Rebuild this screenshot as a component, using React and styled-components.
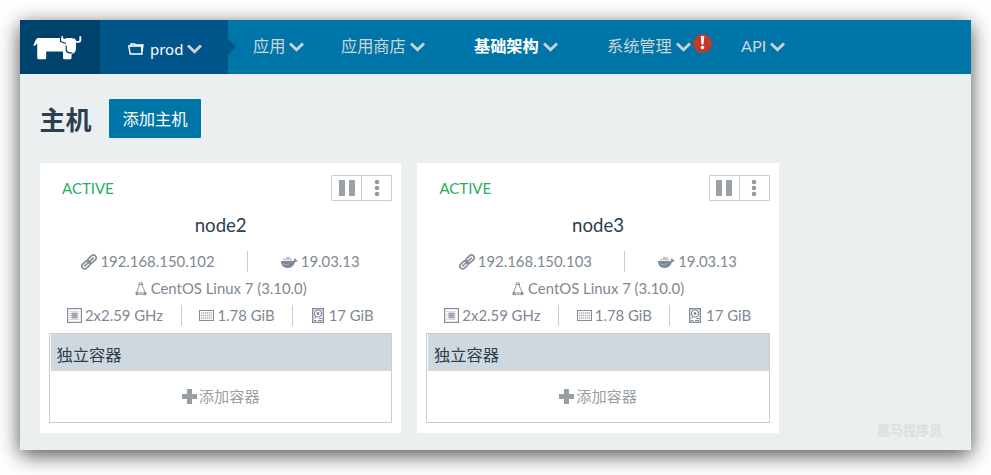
import React from "react";
import styled, { createGlobalStyle } from "styled-components";

const Global = createGlobalStyle`
  *, *::before, *::after { box-sizing: border-box; }
  html, body { margin: 0; background: #fff; overflow: hidden; }
  body { font-family: Lato, "Noto Sans CJK SC", sans-serif; font-size: 15px; color: #2c3e50; }
  button { font: inherit; margin: 0; padding: 0; border: 0; background: none; }
  svg { display: block; flex: none; }
`;

const Frame = styled.div`padding: 20px; height: 475px;`;

const Window = styled.div`
  display: flex;
  flex-direction: column;
  position: relative;
  width: 951px;
  height: 430px;
  background: #ebeff0;
  box-shadow: 0 5px 20px rgba(0, 0, 0, 0.7);
`;

const Nav = styled.nav`
  display: flex;
  height: 54px;
  background: #0075a8;
  line-height: 20px;
`;

const Logo = styled.div`
  width: 80px;
  padding: 16px 0 0 13px;
  background: #00426e;
`;

const Env = styled.div`
  position: relative;
  display: flex;
  align-items: center;
  width: 128px;
  padding: 4px 0 0 28px;
  background: #00558b;
  color: #fff;
  font-family: "Noto Sans", "Open Sans", sans-serif;
  font-size: 15px;
  &::after {
    content: "";
    position: absolute;
    left: 100%;
    top: 19px;
    border: 8px solid transparent;
    border-right: 0;
    border-left-color: #00558b;
  }
`;

const EnvName = styled.span`margin: 0 4px 0 6px;`;

const NavItem = styled.div`
  display: flex;
  align-items: center;
  position: relative;
  width: ${(p) => p.$width}px;
  padding-left: ${(p) => p.$indent}px;
  gap: 4px;
  color: ${(p) => (p.$active ? "#fff" : "#ccd6da")};
  font-weight: ${(p) => (p.$active ? 700 : 400)};
  font-size: 16.2px;
  white-space: nowrap;
`;

const NavLabel = styled.span`padding-bottom: 2px;`;

const Alert = styled.span`
  position: absolute;
  left: ${(p) => p.$left}px;
  top: 14px;
  width: 19px;
  height: 19px;
  border-radius: 50%;
  background: #c0392b;
  display: flex;
  justify-content: center;
  padding-top: 2px;
`;

const Heading = styled.header`
  display: flex;
  align-items: center;
  gap: 17px;
  height: 39px;
  margin: 25px 0 25px 20px;
`;

const Title = styled.h1`
  width: 52px;
  margin: 0;
  font-size: 26px;
  line-height: 39px;
  font-weight: 700;
  padding-top: 3px;
  text-indent: -0.5px;
`;

const AddHost = styled.button`
  width: 92px;
  height: 39px;
  border-radius: 1px;
  background: #0075a8;
  color: #fff;
  font-size: 16.3px;
  line-height: 37px;
  padding-bottom: 1px;
`;

const Hosts = styled.main`
  display: grid;
  grid-template-columns: 361.4px 361.4px;
  gap: 16px;
  padding-left: 20px;
`;

const Card = styled.article`
  height: 270px;
  padding: 12px 9px 0;
  background: #fff;
  color: #808794;
`;

const CardTop = styled.div`
  display: flex;
  justify-content: space-between;
  height: 27px;
  padding-left: 13px;
`;

const Status = styled.span`
  color: #27ae60;
  line-height: 27px;
`;

const Actions = styled.div`
  display: flex;
  width: 61px;
  height: 26px;
  border: 1px solid #c9cdd0;
  border-radius: 1px;
`;

const Action = styled.button`
  flex: 1;
  display: flex;
  align-items: center;
  justify-content: center;
  & + & { border-left: 1px solid #c9cdd0; }
`;

const HostName = styled.h2`
  margin: 10px 0 13px;
  font-size: 18.6px;
  line-height: 26px;
  font-weight: 400;
  color: #2c3e50;
  text-align: center;
`;

const Stats = styled.div`
  display: grid;
  grid-template-columns: ${(p) => p.$columns};
  height: 21px;
  margin-bottom: 6px;
  line-height: 21px;
  font-size: 14.9px;
`;

const Stat = styled.div`
  display: flex;
  align-items: center;
  justify-content: center;
  gap: ${(p) => p.$gap || 3}px;
  white-space: nowrap;
  & + & { border-left: 1px solid #c9cdd0; }
`;

const Stack = styled.section`
  height: 90px;
  margin-top: 7px;
  border: 1px solid #c9cdd0;
`;

const StackName = styled.h3`
  height: 37px;
  margin: 0 0 0 1px;
  padding: 2px 0 0 5.5px;
  background: #d0d8df;
  color: #2c3e50;
  font-size: 16.3px;
  font-weight: 400;
  line-height: 37px;
`;

const AddContainer = styled.button`
  display: flex;
  align-items: center;
  justify-content: center;
  gap: 2px;
  width: 100%;
  height: 51px;
  color: #98a0a5;
  font-size: 15.2px;
`;

const AddLabel = styled.span`padding-bottom: 3px;`;

const Watermark = styled.span`
  position: absolute;
  right: 29px;
  bottom: 10px;
  font-size: 13px;
  line-height: 20px;
  font-weight: 900;
  color: #dedfdf;
`;

const Chevron = () => (
  <svg width="15" height="10" viewBox="0 0 15 10">
    <path d="M1 1.400 7.500 7.800 14 1.400" fill="none" stroke="#cbd3d7" strokeWidth="2.800" />
  </svg>
);

const Cow = () => (
  <svg width="49" height="24" viewBox="0 0 49 24" fill="#fff">
    <path d="M5 2H42Q43 2 43 3V12.500Q42.500 16.500 41 17L38.500 18.500V22Q38.500 23.300 37.200 23.300H31.500Q30 23.300 30 21.800V15.500H13.200V21.800Q13.200 23.300 11.700 23.300H5.700Q4.200 23.300 4.200 21.800V7.500L1.500 10 .3 9.300 3 3.500Q3.600 2 5 2Z" />
    <path d="M47.300.3V4Q47.300 5.800 45.500 5.800H42" fill="none" stroke="#fff" strokeWidth="1.800" />
    <path d="M27.600 2V5.600L33 7.500M33.200 9.500V14Q34 16.800 36.500 16.800H39.500" fill="none" stroke="#00426e" strokeWidth="1.200" />
    <path d="M29.200 0V3.500Q29.500 4.300 33 4.300" fill="none" stroke="#fff" strokeWidth="1.400" />
    <path d="M30.500 1.500V2.800H33V1.500ZM39.500 1.500H43V4L41.500 2.600H39.500Z" fill="#00426e" />
  </svg>
);

const Folder = () => (
  <svg width="16" height="12" viewBox="0 0 16 12" fill="none" stroke="#fff" strokeWidth="1.400">
    <path d="M2.200 11 .8 3H13.500L14 11ZM3 3V1H6.500L7.500 2H15L14 9" />
  </svg>
);

const Bang = () => (
  <svg width="5" height="14" viewBox="0 0 5 14" fill="#fff">
    <path d="M.7 0H4.300L3.500 8.500H1.500Z" />
    <circle cx="2.500" cy="11.500" r="1.800" />
  </svg>
);

const Pause = () => (
  <svg width="16" height="16" viewBox="0 0 16 16" fill="#9aa2a8">
    <path d="M0 0H6V16H0ZM10 0H16V16H10Z" />
  </svg>
);

const Dots = () => (
  <svg width="6" height="18" viewBox="0 0 6 18" fill="#929aa2">
    <circle cx="3" cy="3" r="2.300" />
    <circle cx="3" cy="9" r="2.300" />
    <circle cx="3" cy="15" r="2.300" />
  </svg>
);

const LinkIcon = () => (
  <svg width="16" height="16" viewBox="0 0 16 16" fill="none" stroke="#858c98">
    <g transform="rotate(-43 8 8)">
      <rect x="-.8" y="5.200" width="9.300" height="5.600" rx="2.800" strokeWidth="1.700" />
      <rect x="7.500" y="5.200" width="9.300" height="5.600" rx="2.800" strokeWidth="1.700" />
      <path d="M1.500 8H14.500" strokeWidth="1.600" />
    </g>
  </svg>
);

const Whale = () => (
  <svg width="17" height="12" viewBox="0 0 17 12">
    <path d="M0 5H12.500Q13.700 4.500 13 3L14 2.300Q15 3 15 4.200L17 4.500Q16 6 14 6Q12 12 6.500 12Q0 12 0 5Z" fill="#808a97" />
    <path d="M2 3.500H11M5 1.800H9.500" stroke="#bcc1c8" strokeWidth="1.600" />
    <path d="M2 8Q5 9.500 8 8" stroke="#b8bec5" strokeWidth=".6" fill="none" />
  </svg>
);

const Penguin = () => (
  <svg width="12" height="14" viewBox="0 0 12 14" fill="none" stroke="#858c98">
    <path d="M4 2Q4 .5 5.800.5T7.500 2V4.500Q9.800 7.500 9.500 11H2.200Q1.500 8 4 4.500Z" strokeWidth=".9" />
    <path d="M4.500 2.500H7" strokeWidth="1.300" />
    <path d="M1 10 3.800 12.500 1 12.800ZM11 10 8.200 12.500 11 12.800Z" fill="#858c98" strokeWidth=".8" />
    <path d="M4.500 12.300H7.500" />
  </svg>
);

const Cpu = () => (
  <svg width="15" height="15" viewBox="0 0 15 15">
    <rect x=".6" y=".6" width="13.800" height="13.800" fill="none" stroke="#858c98" strokeWidth="1.200" />
    <path d="M2.500 3.500H12.500M2.500 5.500H12.500M2.500 7.500H12.500M2.500 9.500H12.500M2.500 11.500H12.500" stroke="#aab0b8" strokeDasharray="1 1" />
    <rect x="4.500" y="4.500" width="6" height="6" fill="#858c98" opacity=".7" />
  </svg>
);

const Memory = () => (
  <svg width="15" height="11" viewBox="0 0 15 11">
    <rect x=".5" y=".5" width="14" height="10" fill="none" stroke="#858c98" />
    <path d="M2 3H13M2 5.500H13M2 8H13" stroke="#a5abb4" strokeWidth="1.500" strokeDasharray="1.300 .7" />
  </svg>
);

const Disk = () => (
  <svg width="12" height="15" viewBox="0 0 12 15" fill="none" stroke="#858c98">
    <rect x=".7" y=".7" width="10.600" height="13.600" strokeWidth="1.400" />
    <circle cx="6" cy="5.500" r="3.500" strokeWidth="1.200" />
    <circle cx="6" cy="5.500" r="1.100" fill="#858c98" />
    <path d="M2 12.500H4.500M6 12.500H10M2 10.500 4 9M7 10.500H10" />
  </svg>
);

const Plus = () => (
  <svg width="15" height="15" viewBox="0 0 15 15" fill="#98a0a5">
    <path d="M5 0H10V5H15V10H10V15H5V10H0V5H5Z" />
  </svg>
);

const Host = ({ name, ip }) => (
  <Card>
    <CardTop>
      <Status>ACTIVE</Status>
      <Actions>
        <Action aria-label="Pause"><Pause /></Action>
        <Action aria-label="More"><Dots /></Action>
      </Actions>
    </CardTop>
    <HostName>{name}</HostName>
    <Stats $columns="198px 1fr">
      <Stat><LinkIcon />{ip}</Stat>
      <Stat><Whale />19.03.13</Stat>
    </Stats>
    <Stats $columns="1fr">
      <Stat $gap={4}><Penguin />CentOS Linux 7 (3.10.0)</Stat>
    </Stats>
    <Stats $columns="132px 111px 1fr">
      <Stat><Cpu />2x2.59 GHz</Stat>
      <Stat><Memory />1.78 GiB</Stat>
      <Stat $gap={5}><Disk />17 GiB</Stat>
    </Stats>
    <Stack>
      <StackName>独立容器</StackName>
      <AddContainer><Plus /><AddLabel>添加容器</AddLabel></AddContainer>
    </Stack>
  </Card>
);

export default function App() {
  return (
    <Frame>
      <Global />
      <Window>
        <Nav>
          <Logo><Cow /></Logo>
          <Env><Folder /><EnvName>prod</EnvName><Chevron /></Env>
          <NavItem $width={93} $indent={25}><NavLabel>应用</NavLabel><Chevron /></NavItem>
          <NavItem $width={134} $indent={20}><NavLabel>应用商店</NavLabel><Chevron /></NavItem>
          <NavItem $width={133} $indent={19} $active><NavLabel>基础架构</NavLabel><Chevron /></NavItem>
          <NavItem $width={133} $indent={19}><NavLabel>系统管理</NavLabel><Chevron /><Alert $left={105}><Bang /></Alert></NavItem>
          <NavItem $width={80} $indent={20}><NavLabel>API</NavLabel><Chevron /></NavItem>
        </Nav>
        <Heading>
          <Title>主机</Title>
          <AddHost>添加主机</AddHost>
        </Heading>
        <Hosts>
          <Host name="node2" ip="192.168.150.102" />
          <Host name="node3" ip="192.168.150.103" />
        </Hosts>
        <Watermark>黑马程序员</Watermark>
      </Window>
    </Frame>
  );
}
